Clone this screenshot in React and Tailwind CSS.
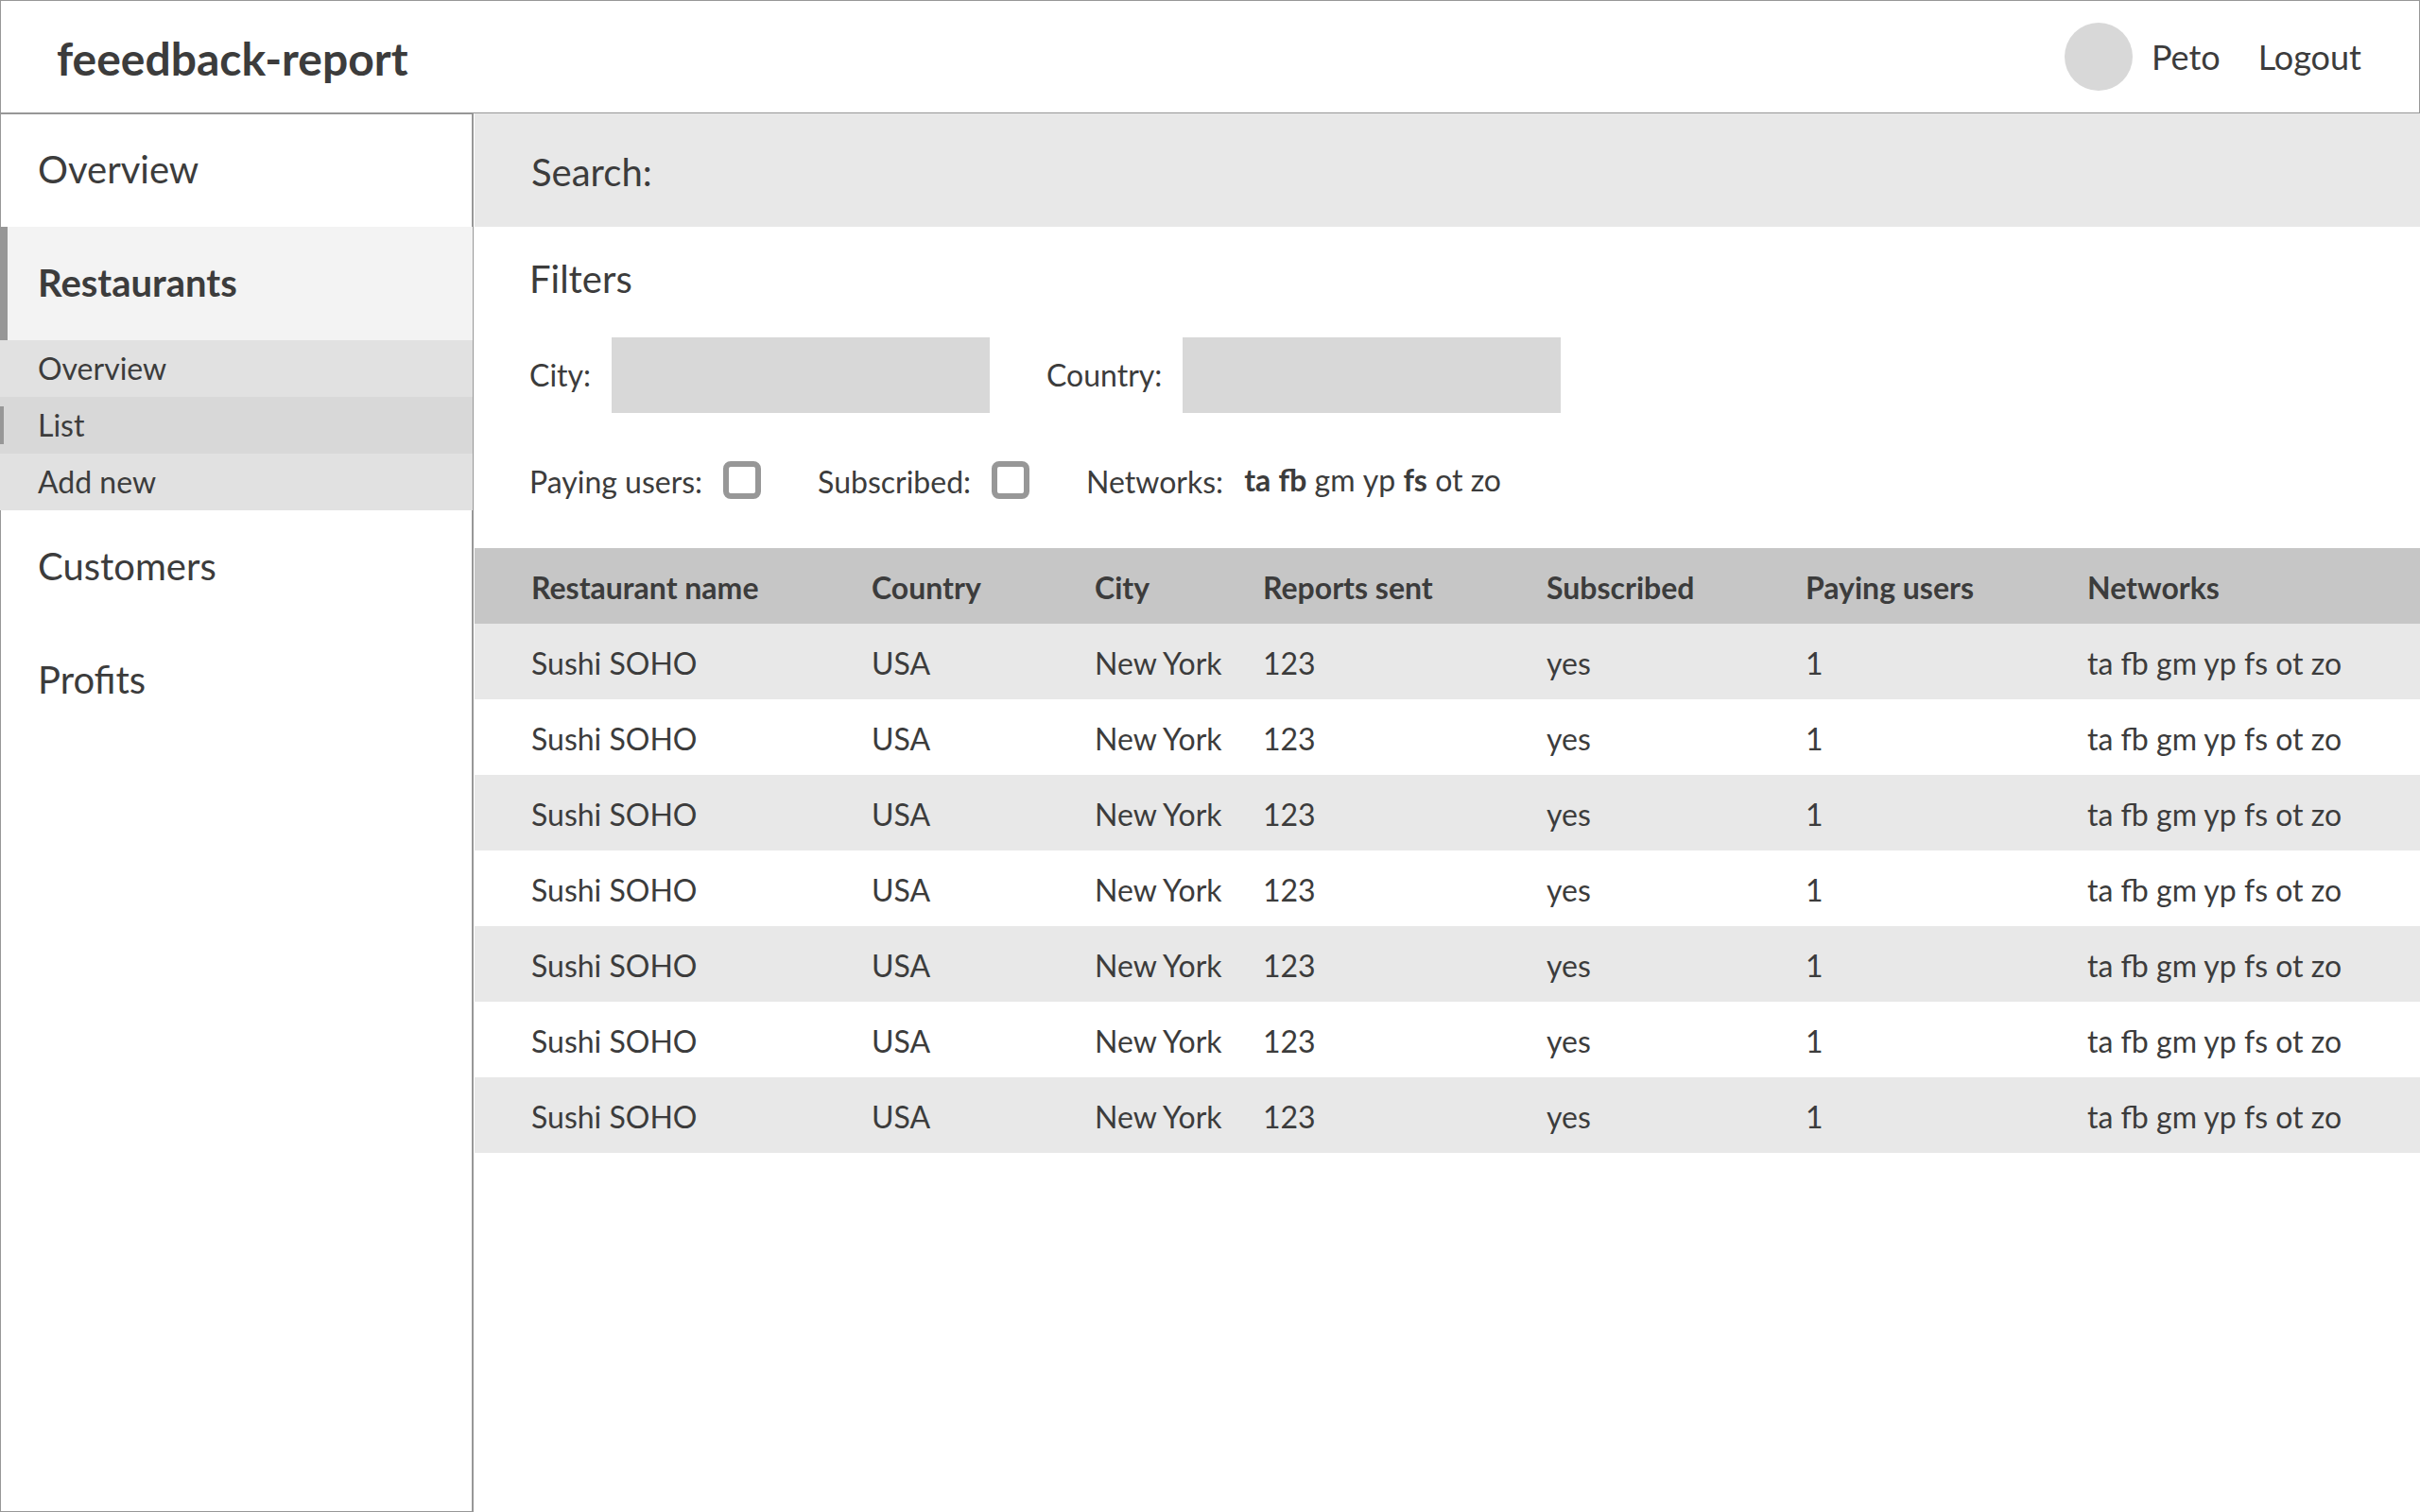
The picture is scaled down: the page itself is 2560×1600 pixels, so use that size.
import React from 'react'

const restaurants = Array.from({ length: 7 }, (_, i) => ({
  id: i + 1,
  name: 'Sushi SOHO',
  country: 'USA',
  city: 'New York',
  reports: 123,
  subscribed: 'yes',
  paying: 1,
  networks: 'ta fb gm yp fs ot zo',
}))

const networks = [
  { id: 'ta', active: true },
  { id: 'fb', active: true },
  { id: 'gm', active: false },
  { id: 'yp', active: false },
  { id: 'fs', active: true },
  { id: 'ot', active: false },
  { id: 'zo', active: false },
]

function Header() {
  return (
    <header className="flex h-[120px] items-center justify-between border border-[#979797] pr-[61px] pl-[59px]">
      <h1 className="pt-1 text-5xl font-bold">feeedback-report</h1>
      <div className="flex items-center text-4xl">
        <div className="mr-5 size-18 rounded-full bg-[#d8d8d8]" />
        <a href="#profile" className="mr-10">Peto</a>
        <a href="#logout">Logout</a>
      </div>
    </header>
  )
}

function Sidebar() {
  return (
    <aside className="mr-px flex w-[501px] shrink-0 flex-col border-r border-[#979797]">
      <nav className="flex-1 border border-[#979797] text-[40px] leading-[48px]">
        <a href="#overview" className="-mt-px flex h-[120px] items-center pb-0.5 pl-[39px]">Overview</a>
        {/* the open section covers the nav border on both sides */}
        <div className="-mx-px">
          <a
            href="#restaurants"
            className="flex h-[120px] items-center border-l-8 border-[#979797] bg-[#f3f3f3] pb-0.5 pl-8 font-bold"
          >
            Restaurants
          </a>
          <div className="bg-[#e1e1e1] text-[32px] leading-[40px]">
            <a href="#restaurants-overview" className="flex h-[60px] items-center pl-10">Overview</a>
            <a href="#restaurants-list" className="flex h-[60px] items-center bg-[#d8d8d8]">
              <span className="mr-9 h-10 w-1 bg-[#979797]" />
              List
            </a>
            <a href="#restaurants-new" className="flex h-[60px] items-center pl-10">Add new</a>
          </div>
        </div>
        <a href="#customers" className="flex h-[120px] items-center pb-0.5 pl-[39px]">Customers</a>
        <a href="#profits" className="flex h-[120px] items-center pb-0.5 pl-[39px]">Profits</a>
      </nav>
    </aside>
  )
}

function TextFilter({ id, label }) {
  return (
    <div className="flex items-center gap-[22px]">
      <label htmlFor={id}>{label}</label>
      <input id={id} type="text" className="h-20 w-[400px] bg-[#d8d8d8] px-4 outline-none" />
    </div>
  )
}

function CheckFilter({ id, label }) {
  return (
    <div className="flex items-center gap-[22px]">
      <label htmlFor={id} className="pt-1">{label}</label>
      <input
        id={id}
        type="checkbox"
        className="size-10 appearance-none rounded-lg border-6 border-[#979797] checked:bg-[#979797]"
      />
    </div>
  )
}

function Filters() {
  return (
    <section className="px-[58px] pt-[31px] pb-[52px]">
      <h2 className="text-[40px] leading-[48px]">Filters</h2>
      <div className="mt-[38px] flex items-center gap-[60px]">
        <TextFilter id="city" label="City:" />
        <TextFilter id="country" label="Country:" />
      </div>
      {/* fixed row height, so the label padding does not move the table */}
      <div className="mt-[51px] flex h-10 items-center gap-[60px]">
        <CheckFilter id="paying" label="Paying users:" />
        <CheckFilter id="subscribed" label="Subscribed:" />
        <div className="flex items-center gap-[22px]">
          <span id="networks" className="pt-1">Networks:</span>
          <div role="group" aria-labelledby="networks">
            {networks.map((n) => (
              <React.Fragment key={n.id}>
                <button type="button" aria-pressed={n.active} className={n.active ? 'font-bold' : 'font-normal'}>
                  {n.id}
                </button>{' '}
              </React.Fragment>
            ))}
          </div>
        </div>
      </div>
    </section>
  )
}

function RestaurantTable() {
  return (
    <table className="w-full table-fixed text-left">
      <thead>
        <tr className="h-20 bg-[#c6c6c6] *:pt-1">
          <th className="w-[420px] pl-[60px]">Restaurant name</th>
          <th className="w-[236px]">Country</th>
          <th className="w-[178px]">City</th>
          <th className="w-[300px]">Reports sent</th>
          <th className="w-[274px]">Subscribed</th>
          <th className="w-[298px]">Paying users</th>
          <th>Networks</th>
        </tr>
      </thead>
      <tbody>
        {restaurants.map((r) => (
          <tr key={r.id} className="h-20 odd:bg-[#e8e8e8] *:pt-1">
            <td className="pl-[60px]">{r.name}</td>
            <td>{r.country}</td>
            <td>{r.city}</td>
            <td>{r.reports}</td>
            <td>{r.subscribed}</td>
            <td>{r.paying}</td>
            <td>{r.networks}</td>
          </tr>
        ))}
      </tbody>
    </table>
  )
}

export default function App() {
  return (
    <div className="flex min-h-screen flex-col bg-white font-['Lato',sans-serif] text-[32px] leading-[40px] text-[#3c3c3c]">
      <Header />
      <div className="flex flex-1">
        <Sidebar />
        <main className="min-w-0 flex-1">
          <div className="flex h-[120px] items-center gap-5 bg-[#e8e8e8] px-[60px] pt-1 text-[40px] leading-[48px]">
            <label htmlFor="search">Search:</label>
            <input id="search" type="text" className="min-w-0 flex-1 outline-none" />
          </div>
          <Filters />
          <RestaurantTable />
        </main>
      </div>
    </div>
  )
}
